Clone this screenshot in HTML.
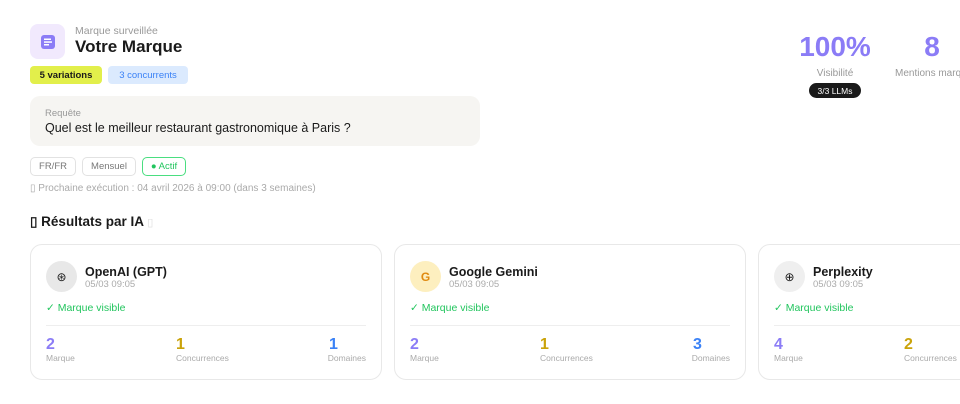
<!DOCTYPE html>
<html><head><meta charset="utf-8"><style>
*{margin:0;padding:0;box-sizing:border-box}
body{width:960px;height:404px;overflow:hidden;background:#fff;font-family:"Liberation Sans",sans-serif;color:#1a1a1a;position:relative}
.a{position:absolute;white-space:nowrap}
.chip{position:absolute;top:157px;height:19px;border:1px solid #e2e2e2;border-radius:5px;font-size:9.5px;line-height:17px;color:#777;text-align:center}
.card{position:absolute;top:244px;width:352px;height:136px;border:1px solid #e8e8e8;border-radius:12px;background:#fff}
.ic{position:absolute;left:15px;top:16px;width:31px;height:31px;border-radius:50%;display:flex;align-items:center;justify-content:center;font-size:12px}
.t{position:absolute;left:54px;top:20px;font-size:12.5px;font-weight:bold}
.d{position:absolute;left:54px;top:34px;font-size:9.5px;color:#aaa}
.v{position:absolute;left:15px;top:57px;font-size:10.5px;color:#22c55e}
.hr{position:absolute;left:15px;right:15px;top:80px;border-top:1px solid #eee}
.n{position:absolute;top:91px;font-size:16px;font-weight:bold}
.l{position:absolute;top:108px;font-size:8.5px;color:#aaa}
.r{right:15px;text-align:right}
</style></head><body>
<div class="a" style="left:30px;top:24px;width:35px;height:35px;background:#f1e9fd;border-radius:8px;display:flex;align-items:center;justify-content:center">
<svg width="16" height="16" viewBox="0 0 16 16"><rect x="1" y="1" width="14" height="14" rx="3" fill="#8b7cf6"/><rect x="4" y="4.5" width="7" height="1.5" fill="#fff"/><rect x="4" y="7.3" width="8" height="1.5" fill="#fff"/><rect x="4" y="10" width="5" height="1.5" fill="#fff"/></svg></div>
<div class="a" style="left:75px;top:25px;font-size:10.5px;color:#999">Marque surveillée</div>
<div class="a" style="left:75px;top:37px;font-size:17px;font-weight:bold">Votre Marque</div>
<div class="a" style="left:30px;top:66px;width:72px;height:18px;background:#e2ef4b;border-radius:4px;font-size:9.5px;font-weight:bold;display:flex;align-items:center;justify-content:center">5 variations</div>
<div class="a" style="left:108px;top:66px;width:80px;height:18px;background:#dbeafe;border-radius:4px;font-size:9.5px;color:#3b82f6;display:flex;align-items:center;justify-content:center">3 concurrents</div>
<div class="a" style="left:30px;top:96px;width:450px;height:50px;background:#f6f5f2;border-radius:10px"></div>
<div class="a" style="left:45px;top:108px;font-size:9.5px;color:#999">Requête</div>
<div class="a" style="left:45px;top:121px;font-size:12.5px">Quel est le meilleur restaurant gastronomique à Paris ?</div>
<div class="chip" style="left:30px;width:46px">FR/FR</div>
<div class="chip" style="left:82px;width:54px">Mensuel</div>
<div class="chip" style="left:142px;width:44px;border-color:#4ade80;color:#22c55e">● Actif</div>
<div class="a" style="left:30px;top:183px;font-size:10px;color:#aaa">▯ Prochaine exécution : 04 avril 2026 à 09:00 (dans 3 semaines)</div>
<div class="a" style="left:30px;top:214px;font-size:13.5px;font-weight:bold">▯ Résultats par IA <span style="color:#ddd;font-weight:normal;font-size:11px">▯</span></div>
<div class="a" style="left:785px;top:31px;width:100px;text-align:center;font-size:28px;font-weight:bold;color:#8b7cf6">100%</div>
<div class="a" style="left:785px;top:68px;width:100px;text-align:center;font-size:10px;color:#999">Visibilité</div>
<div class="a" style="left:809px;top:83px;width:52px;height:15px;background:#1a1a1a;border-radius:8px;color:#fff;font-size:8.5px;display:flex;align-items:center;justify-content:center">3/3 LLMs</div>
<div class="a" style="left:912px;top:31px;width:40px;text-align:center;font-size:28px;font-weight:bold;color:#8b7cf6">8</div>
<div class="a" style="left:895px;top:68px;font-size:10px;color:#999">Mentions marque</div>

<div class="card" style="left:30px">
<div class="ic" style="background:#e8e8e8">⊛</div><div class="t">OpenAI (GPT)</div><div class="d">05/03 09:05</div>
<div class="v">✓ Marque visible</div><div class="hr"></div>
<div class="n" style="left:15px;color:#8b7cf6">2</div><div class="l" style="left:15px">Marque</div>
<div class="n" style="left:145px;color:#caa30a">1</div><div class="l" style="left:145px">Concurrences</div>
<div class="n" style="left:298px;color:#3b82f6">1</div><div class="l r">Domaines</div>
</div>
<div class="card" style="left:394px">
<div class="ic" style="background:#fdefbf;color:#e08a10;font-weight:bold">G</div><div class="t">Google Gemini</div><div class="d">05/03 09:05</div>
<div class="v">✓ Marque visible</div><div class="hr"></div>
<div class="n" style="left:15px;color:#8b7cf6">2</div><div class="l" style="left:15px">Marque</div>
<div class="n" style="left:145px;color:#caa30a">1</div><div class="l" style="left:145px">Concurrences</div>
<div class="n" style="left:298px;color:#3b82f6">3</div><div class="l r">Domaines</div>
</div>
<div class="card" style="left:758px">
<div class="ic" style="background:#efefef">⊕</div><div class="t">Perplexity</div><div class="d">05/03 09:05</div>
<div class="v">✓ Marque visible</div><div class="hr"></div>
<div class="n" style="left:15px;color:#8b7cf6">4</div><div class="l" style="left:15px">Marque</div>
<div class="n" style="left:145px;color:#caa30a">2</div><div class="l" style="left:145px">Concurrences</div>
</div>
</body></html>
